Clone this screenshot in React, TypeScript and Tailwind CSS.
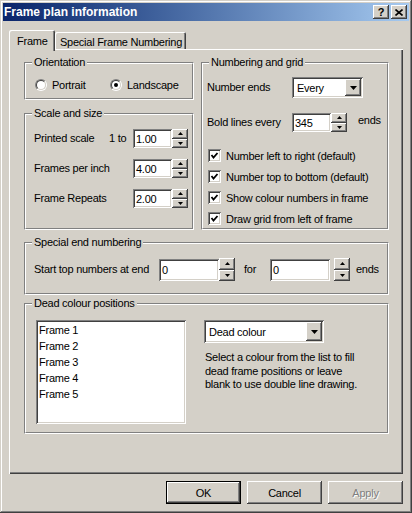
import type { ReactNode } from 'react';

const raised =
  'shadow-[inset_-1px_-1px_#404040,inset_1px_1px_#ffffff,inset_-2px_-2px_#808080,inset_2px_2px_#d4d0c8]';
const sunken =
  'shadow-[inset_1px_1px_#808080,inset_-1px_-1px_#ffffff,inset_2px_2px_#404040,inset_-2px_-2px_#d4d0c8]';

function Group({ title, className, children }: { title: string; className: string; children: ReactNode }) {
  return (
    <div className={`relative border border-t-[#808080] border-l-[#808080] border-r-white border-b-white ${className}`}>
      <div className="h-full border border-t-white border-l-white border-r-[#808080] border-b-[#808080]">
        {children}
      </div>
      <span className="absolute left-[7px] -top-[8px] bg-[#d4d0c8] px-[2px] leading-[14px]">{title}</span>
    </div>
  );
}

function Arrow({ up }: { up?: boolean }) {
  return (
    <svg width="5" height="3" viewBox="0 0 5 3" className="block">
      {up ? <polygon points="0,3 2.5,0 5,3" fill="#000" /> : <polygon points="0,0 5,0 2.5,3" fill="#000" />}
    </svg>
  );
}

function Spin({ className }: { className: string }) {
  return (
    <div className={`flex flex-col w-[16px] ${className}`}>
      <div className={`flex-1 bg-[#d4d0c8] flex items-center justify-center ${raised}`}>
        <Arrow up />
      </div>
      <div className={`flex-1 bg-[#d4d0c8] flex items-center justify-center ${raised}`}>
        <Arrow />
      </div>
    </div>
  );
}

function Field({ value, className }: { value: string; className: string }) {
  return (
    <div className={`bg-white flex items-center pl-[3px] ${sunken} ${className}`}>
      <span className="leading-[14px]">{value}</span>
    </div>
  );
}

function Combo({ value, className }: { value: string; className: string }) {
  return (
    <div className={`bg-white flex items-center p-[2px] ${sunken} ${className}`}>
      <span className="flex-1 pl-[3px] leading-[14px]">{value}</span>
      <div className={`w-[16px] h-full bg-[#d4d0c8] flex items-center justify-center ${raised}`}>
        <svg width="7" height="4" viewBox="0 0 7 4" className="block">
          <polygon points="0,0 7,0 3.5,4" fill="#000" />
        </svg>
      </div>
    </div>
  );
}

function Radio({ checked }: { checked?: boolean }) {
  return (
    <span className="w-[12px] h-[12px] rounded-full border border-t-[#808080] border-l-[#808080] border-r-white border-b-white flex">
      <span className="flex-1 rounded-full border border-t-[#404040] border-l-[#404040] border-r-[#d4d0c8] border-b-[#d4d0c8] bg-white flex items-center justify-center">
        {checked && <span className="w-[4px] h-[4px] rounded-full bg-black" />}
      </span>
    </span>
  );
}

function Check({ label }: { label: string }) {
  return (
    <div className="flex items-center h-[13px] gap-[5px] pl-[1px]">
      <span className={`w-[13px] h-[13px] bg-white flex items-center justify-center ${sunken}`}>
        <svg width="9" height="9" viewBox="0 0 9 9" className="block">
          <polyline points="1.5,4 3.5,6.5 7.5,2" fill="none" stroke="#000" strokeWidth="1.8" />
        </svg>
      </span>
      <span className="leading-[14px]">{label}</span>
    </div>
  );
}

function Button({ label, primary, disabled }: { label: string; primary?: boolean; disabled?: boolean }) {
  return (
    <div className={`w-[75px] h-[23px] ${primary ? 'border border-black' : ''}`}>
      <div className={`h-full bg-[#d4d0c8] flex items-center justify-center ${raised}`}>
        <span
          className={`leading-[14px] ${disabled ? 'text-[#808080] [text-shadow:1px_1px_#ffffff]' : 'text-black'}`}
        >
          {label}
        </span>
      </div>
    </div>
  );
}

export default function App() {
  return (
    <div className="w-[412px] h-[513px] bg-[#d4d0c8] p-[3px] flex flex-col whitespace-nowrap text-[11px] tracking-[-0.25px] text-black font-['Liberation_Sans',Arial,sans-serif] shadow-[inset_-1px_-1px_#404040,inset_1px_1px_#d4d0c8,inset_-2px_-2px_#808080,inset_2px_2px_#ffffff]">
      {/* title bar */}
      <div className="h-[18px] bg-linear-to-r from-[#0a246a] to-[#a6caf0] flex items-center pl-[1px] pr-[2px]">
        <span className="flex-1 text-white font-bold text-[12px] tracking-normal leading-[14px]">Frame plan information</span>
        <div className={`w-[16px] h-[14px] bg-[#d4d0c8] flex items-center justify-center ${raised}`}>
          <span className="font-bold text-[11px] leading-[12px] tracking-normal">?</span>
        </div>
        <div className={`ml-[2px] w-[16px] h-[14px] bg-[#d4d0c8] flex items-center justify-center ${raised}`}>
          <svg width="8" height="7" viewBox="0 0 8 7" className="block">
            <path d="M0.5 0.5 L7.5 6.5 M7.5 0.5 L0.5 6.5" stroke="#000" strokeWidth="1.6" />
          </svg>
        </div>
      </div>

      <div className="flex-1 px-[6px] pt-[9px] flex flex-col">
        {/* tabs */}
        <div className="flex items-end h-[19px]">
          <div className="relative z-10 h-[21px] -mb-[2px] w-[46px] pl-[8px] pt-[3px] bg-[#d4d0c8] rounded-t-[2px] shadow-[inset_1px_1px_#ffffff,inset_-1px_0_#404040,inset_-2px_0_#808080]">
            <span className="leading-[14px]">Frame</span>
          </div>
          <div className="h-[17px] w-[131px] pl-[5px] pt-[2px] bg-[#d4d0c8] rounded-t-[2px] shadow-[inset_1px_1px_#ffffff,inset_-1px_0_#404040,inset_-2px_0_#808080]">
            <span className="leading-[14px]">Special Frame Numbering</span>
          </div>
        </div>

        {/* tab panel */}
        <div className="h-[425px] w-[394px] pl-[15px] pt-[13px] shadow-[inset_1px_1px_#ffffff,inset_-1px_-1px_#404040,inset_-2px_-2px_#808080]">
          <div className="flex gap-[7px]">
            <div className="w-[170px] flex flex-col gap-[13px]">
              <Group title="Orientation" className="h-[38px]">
                <div className="flex items-center pt-[14px] pl-[9px]">
                  <div className="w-[75px] flex items-center gap-[5px]">
                    <Radio />
                    <span className="leading-[14px]">Portrait</span>
                  </div>
                  <div className="flex items-center gap-[5px]">
                    <Radio checked />
                    <span className="leading-[14px]">Landscape</span>
                  </div>
                </div>
              </Group>
              <Group title="Scale and size" className="h-[117px]">
                <div className="flex flex-col gap-[11px] pt-[14px] pl-[8px]">
                  <div className="flex items-center h-[19px]">
                    <span className="w-[75px]">Printed scale</span>
                    <span className="w-[24px]">1 to</span>
                    <Field value="1.00" className="w-[39px] h-[19px]" />
                    <Spin className="h-[19px]" />
                  </div>
                  <div className="flex items-center h-[19px]">
                    <span className="w-[99px]">Frames per inch</span>
                    <Field value="4.00" className="w-[39px] h-[19px]" />
                    <Spin className="h-[19px]" />
                  </div>
                  <div className="flex items-center h-[19px]">
                    <span className="w-[99px]">Frame Repeats</span>
                    <Field value="2.00" className="w-[39px] h-[19px]" />
                    <Spin className="h-[19px]" />
                  </div>
                </div>
              </Group>
            </div>

            <Group title="Numbering and grid" className="w-[188px] h-[168px]">
              <div className="flex flex-col pt-[13px] pl-[4px]">
                <div className="flex items-center h-[21px]">
                  <span className="w-[85px]">Number ends</span>
                  <Combo value="Every" className="w-[71px] h-[21px]" />
                </div>
                <div className="flex items-center h-[19px] mt-[15px]">
                  <span className="w-[85px]">Bold lines every</span>
                  <Field value="345" className="w-[39px] h-[19px]" />
                  <Spin className="h-[19px]" />
                  <span className="ml-[11px] -mt-[4px]">ends</span>
                </div>
                <div className="flex flex-col gap-[8px] mt-[17px]">
                  <Check label="Number left to right (default)" />
                  <Check label="Number top to bottom (default)" />
                  <Check label="Show colour numbers in frame" />
                  <Check label="Draw grid from left of frame" />
                </div>
              </div>
            </Group>
          </div>

          <Group title="Special end numbering" className="mt-[12px] w-[365px] h-[53px]">
            <div className="flex items-center pt-[14px] pl-[8px]">
              <span className="w-[125px]">Start top numbers at end</span>
              <Field value="0" className="w-[60px] h-[22px]" />
              <Spin className="h-[23px]" />
              <span className="ml-[9px] w-[26px]">for</span>
              <Field value="0" className="w-[60px] h-[22px]" />
              <Spin className="ml-[4px] h-[23px]" />
              <span className="ml-[6px]">ends</span>
            </div>
          </Group>

          <Group title="Dead colour positions" className="mt-[8px] w-[365px] h-[131px]">
            <div className="flex pt-[15px] pl-[10px]">
              <div className={`w-[150px] h-[104px] bg-white pt-[2px] pl-[3px] ${sunken}`}>
                {['Frame 1', 'Frame 2', 'Frame 3', 'Frame 4', 'Frame 5'].map(f => (
                  <div key={f} className="leading-[16px]">{f}</div>
                ))}
              </div>
              <div className="ml-[18px] flex flex-col">
                <Combo value="Dead colour" className="w-[120px] h-[23px]" />
                <p className="mt-[8px] leading-[13.5px] pl-[1px]">
                  Select a colour from the list to fill
                  <br />
                  dead frame positions or leave
                  <br />
                  blank to use double line drawing.
                </p>
              </div>
            </div>
          </Group>
        </div>

        {/* buttons */}
        <div className="mt-[7px] flex justify-end gap-[6px]">
          <Button label="OK" primary />
          <Button label="Cancel" />
          <Button label="Apply" disabled />
        </div>
      </div>
    </div>
  );
}
